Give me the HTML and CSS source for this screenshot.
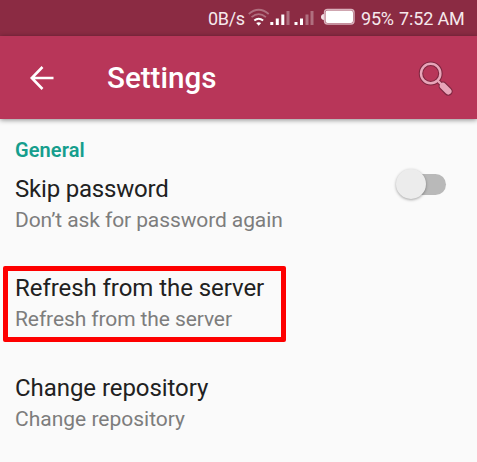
FILE: index.html
```html
<!DOCTYPE html>
<html lang="en">
<head>
<meta charset="utf-8">
<title>Settings</title>
<link rel="stylesheet" href="styles.css">
</head>
<body>
<header class="status">
  <span class="rate">0B/s</span>
  <svg class="indicators" width="110" height="36" viewBox="0 0 110 36">
    <g fill="none" stroke="#fff" stroke-width="1.7">
      <path d="M2.700 14Q12.700 5.500 22.700 14" opacity=".32"/>
      <path d="M5.500 17.200Q12.700 11 19.900 17.200" opacity=".32"/>
      <path d="M8.300 20.600Q12.700 17 17.100 20.600" stroke-width="2"/>
    </g>
    <path d="M10.200 23Q12.700 21.500 15.200 23L12.700 25.800Z" fill="#fff"/>
    <g fill="#fff">
      <path d="M24.300 22h3v3h-3zM29.800 18.500h3V25h-3zM35.300 14.500h3V25h-3z"/>
      <path d="M48.500 22h3v3h-3zM54 18.500h3V25h-3z"/>
      <path d="M40.500 11h3v14h-3zM59.500 14.500h3V25h-3zM64.500 11h3v14h-3z" opacity=".32"/>
    </g>
    <path d="M78 14q-3 .300-3 3t3 3z" fill="#f3e3e7"/>
    <rect x="78.500" y="9.500" width="29.500" height="14.500" rx="3" fill="#8b2b43" stroke="#d9b1bc" stroke-width="1.400"/>
    <rect x="79.500" y="10.500" width="27.500" height="12.500" rx="2" fill="#fff"/>
  </svg>
  <span class="battery">95%</span>
  <span class="clock">7:52 AM</span>
</header>
<nav class="toolbar">
  <svg class="back" width="26" height="26" viewBox="0 0 26 26" fill="none" stroke="#fff" stroke-width="2.600"><path d="M24.500 13H3M13.500 2L2.800 13L13.500 24"/></svg>
  <h1>Settings</h1>
  <svg class="search" width="38" height="38" viewBox="0 0 38 38">
    <g fill="none" stroke="#7d2740">
      <circle cx="14.700" cy="14.500" r="9.700" stroke-width="4.500"/>
      <path d="M21.500 21.500l5 5" stroke-width="4.500"/>
      <path d="M27 27l5.300 5.300" stroke-width="8.800" stroke-linecap="round"/>
    </g>
    <g fill="none" stroke="#e8a5b9">
      <circle cx="14.700" cy="14.500" r="9.700" stroke-width="2.400"/>
      <path d="M21.500 21.500l5 5" stroke-width="2.400"/>
      <path d="M27 27l5.300 5.300" stroke-width="6.500" stroke-linecap="round"/>
    </g>
  </svg>
</nav>
<main>
  <h2>General</h2>
  <section class="item">
    <div class="label"><div class="title skip">Skip password</div><div class="summary ask">Don’t ask for password again</div></div>
    <div class="switch"><span class="thumb"></span></div>
  </section>
  <section class="item marked">
    <div class="label"><div class="title refresh">Refresh from the server</div><div class="summary ask">Refresh from the server</div></div>
  </section>
  <section class="item">
    <div class="label"><div class="title refresh">Change repository</div><div class="summary">Change repository</div></div>
  </section>
</main>
</body>
</html>
```
FILE: styles.css
```css
* { box-sizing: border-box; }
body { margin: 0; width: 477px; height: 462px; overflow: hidden; background: #fafafa; font-family: Roboto, "Liberation Sans", sans-serif; }
.status { height: 36px; background: #8b2b43; color: #f6e8ec; display: flex; font-size: 18px; line-height: 37px; padding-left: 208px; white-space: nowrap; }
.rate { width: 38px; letter-spacing: -.3px; }
.indicators { flex: none; }
.battery { width: 38px; margin-left: 5px; letter-spacing: -.2px; }
.clock { letter-spacing: -.15px; }
.toolbar { height: 83px; background: #b83659; display: flex; align-items: center; padding: 0 23px 0 29px; box-shadow: 0 1px 5px rgba(0,0,0,.45); }
.toolbar h1 { margin: 1px 0 0 52px; font-size: 29.600px; font-weight: 500; line-height: 36px; color: #fff; flex: 1; }
main { padding-top: 18px; }
h2 { margin: 0 0 0 15px; height: 26px; font-size: 20px; line-height: 26px; font-weight: 600; color: #159e8d; letter-spacing: .1px; }
.item { height: 99px; padding: 10px 30px 0 15px; display: flex; justify-content: space-between; }
.title { font-size: 24px; line-height: 32px; color: #212121; white-space: nowrap; }
.summary { font-size: 21px; line-height: 30px; color: #7d7d7d; white-space: nowrap; }
.skip { letter-spacing: -.2px; }
.ask { letter-spacing: -.1px; }
.refresh { letter-spacing: -.06px; }
.marked { position: relative; height: 100px; }
.marked::after { content: ""; box-sizing: border-box; position: absolute; left: 3px; top: 4px; width: 283px; height: 76px; border: 5px solid #fe0000; border-radius: 2px; }
.switch { width: 45px; height: 21px; margin: 1px 1px 0 0; border-radius: 11px; background: #b9b9b9; position: relative; }
.thumb { position: absolute; left: -5px; top: -5px; width: 30px; height: 30px; border-radius: 50%; background: #ececec; box-shadow: 0 1px 3px rgba(0,0,0,.35); }
```
